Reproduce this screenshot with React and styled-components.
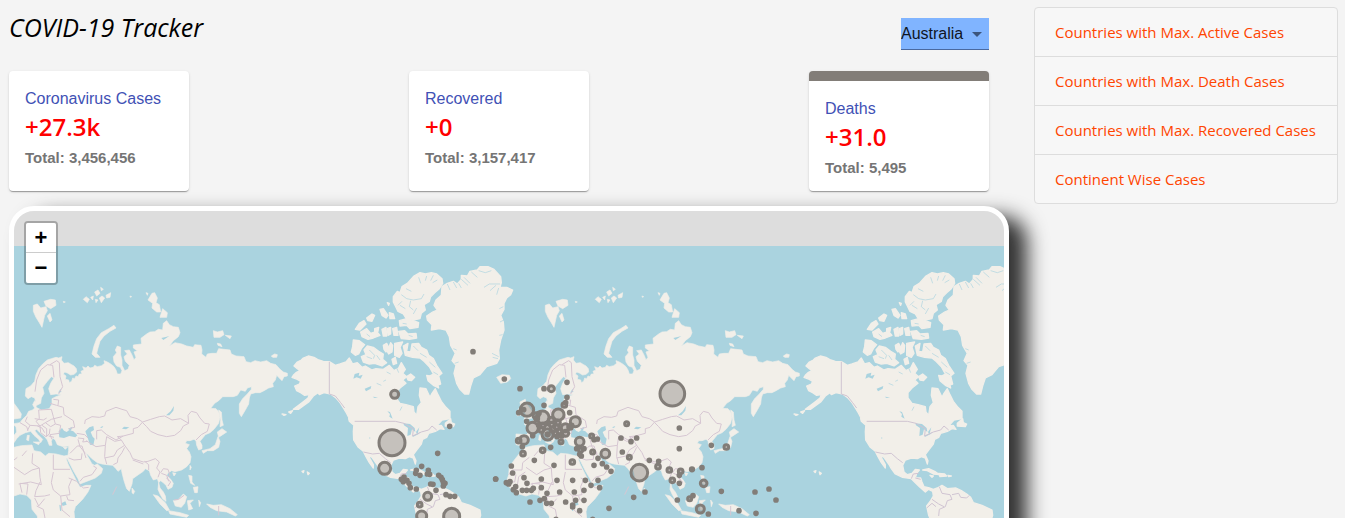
import React from 'react';
import styled, { createGlobalStyle } from 'styled-components';

const GlobalStyle = createGlobalStyle`
  *, *::before, *::after { box-sizing: border-box; }
  body { margin: 0; background: #f4f4f4; overflow: hidden; }
`;

const segoe = `"Segoe UI", "Open Sans", "Noto Sans", sans-serif`;
const arial = `Arial, "Liberation Sans", sans-serif`;

const Page = styled.div`
  display: flex;
  align-items: flex-start;
  gap: 25px;
  height: 100vh;
  padding: 7px 7px 0 9px;
  overflow: hidden;
`;

const Main = styled.main`
  flex: 1;
  min-width: 0;
`;

const Header = styled.header`
  display: flex;
  justify-content: space-between;
  align-items: center;
  height: 64px;
  padding: 0 20px 0 0;
`;

const Title = styled.h1`
  margin: 0;
  padding-bottom: 24px;
  font: italic 400 25px/40px ${segoe};
  color: #000;
`;

const SelectBox = styled.div`
  position: relative;
  width: 88px;
  margin-bottom: 10px;
`;

const CountrySelect = styled.select`
  display: block;
  width: 100%;
  height: 32px;
  padding: 0 24px 0 0;
  border: 0;
  border-bottom: 1px solid #4a69a0;
  border-radius: 0;
  outline: 0;
  appearance: none;
  background: #80b4ff;
  color: #10161f;
  font: 16px/30px ${arial};
`;

const Arrow = styled.svg`
  position: absolute;
  top: 4px;
  right: 0;
  pointer-events: none;
`;

const Stats = styled.section`
  display: flex;
  justify-content: space-between;
  padding-right: 20px;
`;

const Card = styled.article`
  width: 180px;
  height: 120px;
  padding: 16px;
  border-top: ${(p) => (p.$active ? '10px solid #827d78' : '0')};
  border-radius: 4px;
  background: #fff;
  box-shadow: 0 2px 1px -1px rgba(0, 0, 0, 0.2), 0 1px 1px rgba(0, 0, 0, 0.14),
    0 1px 3px rgba(0, 0, 0, 0.12);
`;

const CardLabel = styled.h2`
  margin: 0;
  font: 400 16px/24px ${arial};
  color: #3f51b5;
`;

const CardValue = styled.p`
  margin: 0;
  font: 600 24px/32px ${segoe};
  color: #f00;
`;

const CardTotal = styled.p`
  margin: 0;
  font: 700 15px/30px ${arial};
  color: #757575;
`;

const MapFrame = styled.section`
  position: relative;
  height: 500px;
  margin-top: 15px;
  overflow: hidden;
  border: 5px solid #fff;
  border-radius: 25px;
  background: #ddd;
  box-shadow: 18px 10px 20px #333;
`;

const MapCanvas = styled.svg`
  display: block;
  width: 100%;
  height: 100%;
`;

const ZoomControl = styled.div`
  position: absolute;
  top: 10px;
  left: 10px;
  overflow: hidden;
  border: 2px solid rgba(0, 0, 0, 0.25);
  border-radius: 4px;
  background-clip: padding-box;
`;

const ZoomButton = styled.button`
  display: block;
  width: 30px;
  height: 30px;
  padding: 0;
  border: 0;
  border-bottom: ${(p) => (p.$first ? '1px solid #ccc' : '0')};
  background: #fff;
  color: #000;
  font: 700 22px/30px "Liberation Sans", sans-serif;
`;

const LinkList = styled.ul`
  flex: none;
  width: 304px;
  margin: 0;
  padding: 0;
  list-style: none;
  border: 1px solid #ddd;
  border-radius: 4px;
  background: #f7f7f7;
`;

const LinkItem = styled.li`
  & + & { border-top: 1px solid #ddd; }
`;

const ListLink = styled.a`
  display: block;
  padding: 0 20px;
  font: 400 15px/48px ${segoe};
  color: #ff4500;
  text-decoration: none;
  white-space: nowrap;
`;

const CARDS = [
  { label: 'Coronavirus Cases', value: '+27.3k', total: '3,456,456' },
  { label: 'Recovered', value: '+0', total: '3,157,417' },
  { label: 'Deaths', value: '+31.0', total: '5,495', active: true },
];

const LINKS = [
  'Countries with Max. Active Cases',
  'Countries with Max. Death Cases',
  'Countries with Max. Recovered Cases',
  'Continent Wise Cases',
];

/* Outlines of the Old World, three units to a screen pixel. */
const EURASIA = [
  // mainland with Africa
  '168,352 176,354 186,350 184,360 192,370 205,368 215,374 222,378 229,386 230,396 222,403 212,405 202,399 194,396 190,402 198,408 196,418 206,420 208,428 215,424 218,414 224,416 228,408 234,410 238,402 246,402 243,394 252,390 248,380 258,384 264,378 270,384 280,382 284,376 292,380 305,377 314,370 312,362 322,366 332,372 342,380 348,390 352,402 362,402 366,392 361,382 350,378 342,366 340,350 350,338 346,330 352,318 362,322 362,345 366,360 366,376 374,392 384,388 388,376 376,364 372,350 382,342 374,332 388,330 396,345 402,360 408,352 402,336 412,332 400,324 400,315 425,312 423,295 440,282 450,276 464,275 475,268 488,270 490,250 500,242 508,254 520,260 535,262 540,278 535,290 520,302 508,318 525,308 545,312 560,318 580,322 584,314 603,316 606,330 605,342 618,352 622,342 636,340 650,340 656,326 672,328 690,330 694,342 708,348 732,350 738,365 752,368 765,362 782,366 800,362 812,370 828,374 840,388 850,396 862,400 862,408 852,410 846,422 838,414 830,406 826,420 818,430 820,440 806,444 792,452 780,458 766,458 752,462 748,474 746,492 736,510 724,530 718,520 718,492 728,476 742,462 754,448 754,440 742,444 736,454 722,450 712,466 700,470 668,470 656,482 644,490 632,505 648,506 656,516 660,532 656,550 642,568 630,578 616,584 605,598 600,604 606,616 606,626 596,630 590,616 588,602 582,598 570,602 560,602 556,610 568,614 560,626 568,636 573,650 570,668 560,680 545,690 525,695 515,692 505,698 500,706 512,718 520,730 516,742 504,748 498,736 490,728 482,722 476,728 480,744 490,756 496,768 498,784 488,776 480,762 474,748 476,728 472,716 460,720 452,706 448,692 436,686 430,694 415,704 398,716 396,732 388,754 380,746 372,722 366,698 364,686 354,694 348,686 338,676 320,674 306,672 292,668 276,656 262,642 258,640 266,654 276,672 284,676 292,672 308,686 304,700 286,714 240,732 234,716 220,692 208,668 202,656 198,654 204,672 218,700 228,720 240,742 258,736 273,736 264,756 248,778 226,800 222,815 226,860 115,860 112,828 96,808 94,780 80,766 60,762 42,768 12,760 -4,746 -18,728 -10,705 -8,680 10,656 28,634 42,622 64,617 96,615 102,632 122,636 136,648 146,640 168,642 192,648 204,646 206,632 206,618 190,620 172,614 166,600 158,594 154,604 156,616 148,616 142,600 134,590 120,578 110,568 104,572 114,584 128,598 122,608 116,598 102,586 92,574 76,578 60,586 50,596 42,608 30,618 12,614 12,582 44,584 50,576 48,560 36,552 60,548 66,540 80,526 86,514 98,510 104,504 98,494 104,482 110,490 108,502 124,510 148,506 156,492 156,476 168,470 184,464 168,462 152,464 146,446 152,430 162,414 154,410 142,424 128,442 132,460 124,474 122,490 110,496 104,474 94,470 84,476 76,468 78,446 92,438 104,424 108,404 116,386 128,372 142,360 154,356',
  // Svalbard
  '100,196 112,192 122,204 138,200 142,212 134,226 126,262 118,248 108,232 100,214',
  '132,184 152,178 166,180 168,196 152,206 138,198',
  '142,228 150,220 156,240 150,246',
  // Franz Josef Land
  '250,178 258,170 268,178 262,188', '284,156 294,150 300,160 290,168', '298,174 306,168 314,174 304,188', '318,166 332,158 330,172 320,174', '302,142 310,148 304,152', '272,172 280,168 278,180', '286,178 294,180 288,188', '190,184 196,186 191,188', '390,168 395,170 391,172',
  // Novaya Zemlya
  '276,342 282,318 290,296 304,278 326,266 342,256 348,264 330,274 312,288 300,304 294,324 290,340 300,352 286,352',
  // Severnaya Zemlya
  '444,180 456,160 464,158 472,174 468,188 478,194 482,216 470,216 456,204 458,190', '480,232 488,206 502,218 500,232', '438,158 444,160 442,166',
  // New Siberian Islands
  '640,272 652,276 668,272 672,284 660,292 642,292', '676,286 694,288 690,296', '652,310 662,312 666,320 654,316',
  // Wrangel Island
  '814,348 824,342 832,344 830,352 818,352',
  // Sakhalin, Japan
  '656,510 664,516 666,540 670,556 660,560 662,540', '652,576 666,566 680,576 668,584 656,592', '654,590 660,604 656,622 640,632 622,632 610,640 606,632 630,626 646,614',
  // Taiwan, Hainan, Sri Lanka
  '570,676 574,682 570,690', '518,698 528,700 522,708', '396,744 404,754 400,762 396,758',
  // Philippines
  '566,706 576,708 576,726 584,736 572,730', '580,742 594,740 592,758 584,758',
  // Indonesia and New Guinea
  '460,764 474,768 496,788 508,810 500,812 480,792', '506,812 540,818 566,826 560,832 510,822', '520,782 534,780 550,762 560,770 554,790 544,802 526,798', '562,782 580,780 570,790 578,806 566,810', '620,792 640,796 664,794 690,806 712,824 706,828 680,816 650,812 630,802', '596,780 602,788 598,800',
  // British Isles and Iceland
  '24,486 40,478 42,490 54,506 64,522 62,534 36,538 42,524 36,512 26,500', '14,516 22,504 36,510 30,524 16,528', '-46,412 -30,404 -8,406 -4,416 -14,426 -34,430',
  // Mediterranean islands
  '100,606 120,606 116,614', '82,586 88,586 86,602 80,600', '190,622 202,622 196,628',
];

const AMERICAS = [
  // mainland
  '268,365 250,364 236,360 222,352 205,348 190,354 184,360 172,366 162,378 172,386 180,392 168,398 160,406 156,412 172,418 182,424 178,432 164,438 170,452 182,458 194,466 208,464 204,474 186,488 160,508 176,508 206,486 220,468 234,458 238,464 252,458 272,462 288,474 300,488 310,504 320,520 330,540 342,550 340,575 341,600 355,622 370,634 378,650 388,668 400,684 400,674 390,656 384,644 396,652 410,672 418,686 430,702 452,712 478,716 490,728 504,742 520,756 530,748 542,754 544,768 536,782 524,798 530,826 545,860 712,860 722,826 720,810 690,796 664,788 656,772 644,762 628,752 612,744 586,746 570,736 556,744 544,748 532,744 516,740 510,726 506,714 490,714 494,700 502,690 490,688 480,700 466,704 456,696 452,676 460,660 478,654 496,656 508,650 520,654 526,672 528,662 520,644 530,630 544,612 548,598 560,592 566,580 586,574 600,566 612,568 604,556 590,558 606,540 630,536 630,514 618,502 604,484 594,464 586,446 576,460 570,472 558,446 540,444 538,466 544,488 534,500 530,526 522,516 520,500 498,494 480,490 468,474 468,458 480,444 498,430 488,420 500,410 488,400 496,388 484,368 476,384 462,392 448,376 430,388 408,386 396,390 376,378 366,382 352,368 338,372 328,354 318,366 300,372 286,376',
  // Newfoundland, Vancouver Island
  '616,550 632,536 634,548 644,552 640,560 616,558', '326,536 342,546 340,554 328,544',
  // Southampton and Baffin
  '500,410 512,402 524,412 514,422 504,420', '490,318 504,310 500,334 512,336 516,312 536,310 544,322 560,330 566,346 580,356 590,376 606,400 596,408 602,432 590,436 576,418 566,410 580,402 568,380 552,364 540,354 518,352 496,346', '560,406 578,410 592,428 596,444 580,436 564,422',
  // Victoria, Banks and the central islands
  '340,300 358,302 374,314 364,326 356,342 346,346 334,336 338,320', '364,350 378,344 372,330 382,318 400,322 416,334 430,342 428,358 440,368 426,378 404,370 388,372 370,366', '430,316 440,310 446,322 438,336 432,328', '442,334 452,308 458,316 456,336 446,342', '464,310 488,306 480,322 486,340 478,352 464,346', '456,358 466,352 470,370 460,374',
  '346,268 358,250 372,242 378,252 360,270', '362,276 380,266 392,280 410,274 420,286 400,294 384,298 366,290', '380,234 396,222 404,226 396,244 384,242', '404,266 416,262 414,274 404,276', '420,208 430,206 444,226 438,234 426,226', '448,218 460,222 464,236 450,236', '426,268 438,262 440,288 430,288', '442,266 452,262 452,282 444,286', '458,266 470,262 474,286 462,286',
  '478,242 500,236 520,242 536,248 534,262 510,266 500,256 480,258', '476,274 494,272 504,282 528,280 530,294 508,298 484,296', '442,188 448,190 446,196',
  // Ellesmere and Greenland
  '460,170 472,154 480,158 486,140 502,130 522,108 540,98 556,102 574,98 590,102 606,116 608,130 598,146 584,158 572,170 568,184 552,194 556,210 544,220 540,236 520,240 500,238 490,222 474,214 466,198 460,186',
  '560,228 578,216 592,210 582,196 588,180 604,166 606,140 622,130 640,124 652,132 664,118 664,106 682,108 690,94 712,90 720,80 744,80 762,88 782,110 784,128 780,142 800,142 818,150 812,164 800,174 792,190 792,208 782,226 790,246 792,270 782,300 776,330 778,356 770,370 740,380 720,404 700,414 692,438 686,462 674,462 660,448 650,430 642,400 648,376 636,362 646,340 632,316 628,290 618,270 598,266 574,270 576,254 562,240',
  // Caribbean
  '512,690 530,686 548,694 562,704 544,702 526,692', '560,700 578,702 584,708 564,710', '534,706 544,708 540,712', '588,706 598,708 590,710',
  // Aleutians and Hawaii
  '186,694 192,692 190,698', '202,696 208,700 204,704', '126,522 138,524 132,526', '146,516 158,512 152,520',
];

const INLAND_WATER = [
  '176,574 186,564 192,572 200,576 208,570 220,574 232,586 226,592 208,588 192,594 178,592',
  '204,566 218,560 212,572', '256,574 268,562 280,558 282,570 272,576 278,590 284,596 280,616 270,614 264,596',
  '498,526 512,514 522,498 520,512 508,526', '366,566 372,560 388,562 378,568', '184,790 196,784 200,794 188,798', '178,794 182,796 184,814 180,812',
  '174,458 182,446 184,456', '300,562 310,558 306,564', '508,288 490,300 484,294 500,290',
];

const AMERICAN_LAKES = [
  '344,402 358,398 356,408 368,404 362,416 350,412 340,416', '374,446 394,438 392,446 378,454', '442,514 450,516 458,536 448,530 450,522', '398,470 414,472 404,474',
  '490,550 510,552 524,564 526,576 516,568 512,584 502,588 504,564 492,556', '528,576 538,562 532,584', '516,588 542,576 536,582 520,590', '388,592 392,594 388,596',
];

const EURASIA_BORDERS = `M105,455L110,420L122,390L142,374L158,376L162,412M150,374L170,362L178,368L180,410L188,440L176,462
M60,548L80,560L84,572M82,530L76,544L90,556L120,558L136,548L152,560L166,552L160,530L154,508L116,510L118,536L108,544L120,558L122,578L138,590L148,582L150,566
M150,490L170,496L190,502L192,524L220,542L224,562L206,566M166,552L182,556L178,580L150,584L156,598M160,478L176,480L174,496
M136,548L154,538L186,530M90,556L82,572M104,536L130,540L140,534M112,558L126,564L134,578M126,556L140,566L140,590M146,588L162,592
M254,552L256,540L276,530L298,532L314,528L318,514L348,502L366,508L380,512L390,530L412,536L428,546L414,562L400,566L400,580L370,588L348,600L320,584L304,570L290,572L290,598
M428,546L452,538L478,530L494,528L516,540L542,536L566,550L550,558L542,572L524,586L500,590L474,584L452,574L440,560L428,548
M566,550L564,526L574,514L590,518L600,534L614,550L628,552L622,574L604,584L588,600
M230,580L254,584L264,594M234,594L252,596L248,606L264,604M258,602L288,620L316,616L320,590L344,604L364,600M316,616L314,650L320,672M314,654L342,648L352,630L374,616L364,600L352,590L370,588
M374,616L390,638L398,656L430,666L444,664L466,656L478,666L470,684L480,696L474,712M374,622L366,638L354,654L352,668L340,674M398,660L430,672M434,664L446,674L446,690
M234,598L240,620L256,640M210,640L232,618L246,618L258,654M206,654L222,660L244,658L246,640M240,724L250,712L276,704L290,684L280,678
M482,698L490,686L504,688L510,706L500,714L512,726L504,738M484,700L500,706L506,724M522,780L536,778L552,766M656,798L656,826
M42,682L74,704L96,690L118,684L120,712L124,734L92,726L56,732M98,640L96,670L118,684M160,644L160,688L210,688M160,696L154,728L160,750L182,768L210,764L206,740L216,716M206,714L230,724L250,744L266,742M120,726L108,752L104,770L134,768L150,764M80,764L84,732L60,730M200,768L204,780L222,782M104,774L116,798L134,776M182,768L186,810L210,830M60,732L66,758M110,798L130,808L136,840M-10,705L0,690L30,690L32,668L52,652M-18,724L8,726L12,704M40,696L20,710L14,750M66,648L80,632M338,764L350,740`;

const AMERICAS_BORDERS = `M268,365L268,462L286,468L302,488L314,504M344,544L466,544L492,550L520,566L518,588L544,576L566,570L576,558L590,570M370,636L398,642L418,640L436,656L452,668M478,716L484,702L500,700M490,714L506,718M562,740L570,760L594,764L600,778L586,782L580,800L562,808L560,828M600,764L620,760L626,772L644,774L652,766M524,804L540,790L552,800M540,778L560,792L576,800`;

const FJORDS = `M484,164L500,176L520,180L544,176L552,162M512,182L508,200L520,210M530,204L520,222M480,196L496,206M560,108L556,122M580,106L572,122M592,120L578,128M498,146L514,154M536,112L542,130M486,184L474,196
M640,126L650,144M656,130L664,144M664,118L684,136M672,112L690,130M694,96L712,112M716,92L736,98L754,92M732,142L748,132L780,132M750,152L768,136M776,144L770,164M790,200L778,206M792,240L780,246M788,284L778,286M776,350L756,340M774,356L758,352M622,132L630,150M640,326L650,330M644,370L656,366
M388,330L404,346L400,356M410,346L420,360M380,350L396,356M520,318L534,332M540,340L560,352M568,366L586,382M580,396L594,404M528,388L520,398L530,410M500,376L512,394M466,374L476,398M440,396L452,402M410,430L424,436M430,424L438,420M486,500L480,512M380,282L390,290M488,250L500,252M506,286L518,290`;

/* Marker: x, y, radius of the ring; same units as the outlines. */
const MARKERS_WEST = [
  [699, 335, 3], [793, 417, 3], [464, 463, 12], [629, 559, 3], [456, 608, 39], [434, 685, 18], [593, 640, 3], [545, 679, 3], [529, 691, 3], [527, 700, 4], [540, 706, 3], [565, 691, 3], [562, 702, 4], [569, 703, 3], [596, 706, 4], [603, 712, 4], [607, 719, 4], [610, 727, 4], [615, 730, 4], [610, 738, 4], [572, 732, 4], [579, 733, 3], [588, 751, 3], [492, 711, 4], [484, 718, 3], [490, 725, 4], [501, 721, 3], [507, 730, 3], [511, 743, 3], [529, 747, 3], [563, 769, 12], [539, 794, 7], [545, 828, 15], [635, 829, 24], [618, 764, 3], [630, 769, 3], [644, 769, 3], [767, 717, 3],
];

const MARKERS_EAST = [
  [120, 446, 3], [192, 446, 3], [214, 446, 9], [261, 427, 3], [261, 472, 3], [253, 495, 7], [257, 488, 3], [192, 496, 3], [269, 518, 3], [141, 509, 20], [131, 509, 3], [116, 518, 3], [140, 544, 3], [158, 564, 17], [188, 532, 19], [168, 527, 9], [170, 536, 6], [177, 520, 4], [235, 524, 17], [286, 545, 15], [256, 563, 12], [257, 580, 9], [203, 583, 17], [203, 583, 5], [132, 600, 13], [116, 602, 7], [127, 620, 3], [158, 587, 3], [184, 570, 7], [189, 556, 7], [176, 556, 3], [200, 551, 3], [214, 540, 8], [215, 554, 7], [234, 548, 7], [230, 562, 7], [218, 569, 8], [238, 575, 7], [226, 580, 7], [238, 585, 4], [245, 588, 4], [231, 590, 3], [270, 561, 7], [275, 556, 4], [243, 605, 6], [212, 622, 3], [188, 631, 7], [129, 641, 7], [299, 605, 13], [290, 626, 3], [302, 630, 6], [312, 626, 3], [299, 643, 4], [304, 648, 3], [335, 588, 6], [342, 599, 4], [352, 597, 3], [338, 636, 6], [376, 641, 13], [354, 655, 3], [367, 671, 4], [380, 681, 3], [393, 694, 3], [342, 676, 3], [277, 666, 7], [222, 676, 3], [163, 661, 3], [94, 678, 3], [98, 699, 3], [132, 713, 3], [47, 717, 3], [79, 728, 3], [86, 732, 4], [90, 725, 3], [107, 740, 4], [100, 749, 3], [109, 758, 3], [127, 751, 3], [140, 751, 3], [154, 751, 3], [160, 745, 3], [141, 730, 3], [184, 717, 3], [184, 743, 3], [201, 760, 3], [231, 721, 3], [278, 721, 3], [316, 721, 3], [354, 721, 3], [333, 736, 3], [359, 743, 3], [312, 751, 3], [283, 756, 3], [239, 756, 3], [150, 786, 4], [180, 781, 3], [193, 776, 3], [200, 790, 3], [214, 790, 3], [257, 786, 3], [287, 781, 4], [278, 795, 3], [278, 801, 3], [312, 781, 3], [299, 812, 3], [387, 805, 3], [228, 838, 3], [338, 838, 3],
  [577, 461, 37], [440, 551, 6], [598, 564, 3], [598, 626, 3], [423, 594, 3], [453, 605, 3], [470, 594, 3], [427, 636, 3], [448, 652, 6], [478, 698, 25], [508, 661, 3], [536, 664, 3], [534, 680, 7], [568, 690, 7], [602, 694, 7], [598, 706, 3], [577, 721, 7], [598, 730, 3], [636, 688, 5], [666, 683, 3], [694, 616, 3], [739, 621, 7], [671, 730, 10], [461, 772, 3], [495, 756, 3], [592, 780, 3], [629, 776, 6], [639, 767, 4], [661, 807, 12], [685, 822, 3], [724, 754, 3], [777, 812, 3], [828, 820, 3], [825, 756, 3], [867, 747, 3], [888, 780, 3],
];

const Shapes = ({ list }) => list.map((points) => <polygon key={points} points={points} />);
const Rings = ({ list }) =>
  list.map(([x, y, r], i) => (
    <circle key={i} cx={x} cy={y} r={Math.max(r, 4)} fillOpacity={r < 6 ? 1 : 0.4} />
  ));

const WorldMap = () => (
  <MapCanvas role="img" aria-label="World map of cases">
    <defs>
      <g id="world">
        <g transform="translate(1536 720)">
          <g fill="#f2efe9" stroke="#f2efe9" strokeWidth="2" strokeLinejoin="round"><Shapes list={EURASIA} /></g>
          <g fill="#aad3df"><Shapes list={INLAND_WATER} /></g>
          <path d={EURASIA_BORDERS} fill="none" stroke="#d6c6d2" strokeWidth="3" />
        </g>
        <g transform="translate(720 720)">
          <g fill="#f2efe9" stroke="#f2efe9" strokeWidth="4" strokeLinejoin="round"><Shapes list={AMERICAS} /></g>
          <g fill="#aad3df"><Shapes list={AMERICAN_LAKES} /></g>
          <path d={FJORDS} fill="none" stroke="#aad3df" strokeWidth="2" />
          <path d={AMERICAS_BORDERS} fill="none" stroke="#d0c4d2" strokeWidth="3" />
        </g>
      </g>
    </defs>
    <rect y="35" width="100%" height="512" fill="#aad3df" />
    <g transform="translate(-14 -211) scale(0.33333)">
      {[-1536, 0, 1536].map((x) => <use key={x} href="#world" x={x} />)}
      <g fill="#827d78" stroke="#827d78" strokeWidth="9">
        <g transform="translate(720 720)"><Rings list={MARKERS_WEST} /></g>
        <g transform="translate(1440 720)"><Rings list={MARKERS_EAST} /></g>
      </g>
    </g>
  </MapCanvas>
);

export default function App() {
  return (
    <>
      <GlobalStyle />
      <Page>
        <Main>
          <Header>
            <Title>COVID-19 Tracker</Title>
            <SelectBox>
              <CountrySelect aria-label="Country" defaultValue="Australia">
                <option>Worldwide</option>
                <option>Australia</option>
              </CountrySelect>
              <Arrow width="24" height="24" viewBox="0 0 24 24" aria-hidden="true">
                <path d="M7 10l5 5 5-5z" fill="#3c557d" />
              </Arrow>
            </SelectBox>
          </Header>
          <Stats>
            {CARDS.map((card) => (
              <Card key={card.label} $active={card.active}>
                <CardLabel>{card.label}</CardLabel>
                <CardValue>{card.value}</CardValue>
                <CardTotal>Total: {card.total}</CardTotal>
              </Card>
            ))}
          </Stats>
          <MapFrame>
            <WorldMap />
            <ZoomControl>
              <ZoomButton $first type="button" aria-label="Zoom in">+</ZoomButton>
              <ZoomButton type="button" aria-label="Zoom out">−</ZoomButton>
            </ZoomControl>
          </MapFrame>
        </Main>
        <LinkList>
          {LINKS.map((text) => (
            <LinkItem key={text}><ListLink href="#">{text}</ListLink></LinkItem>
          ))}
        </LinkList>
      </Page>
    </>
  );
}
